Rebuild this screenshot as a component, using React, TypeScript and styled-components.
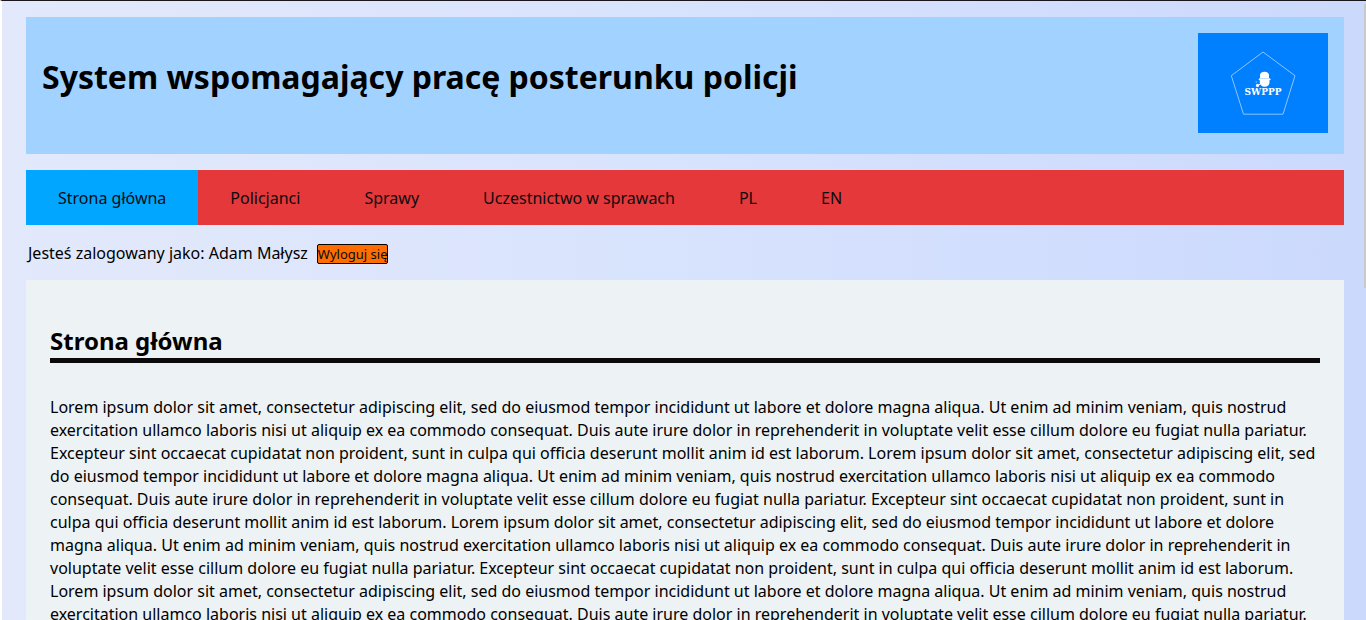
import React from "react";
import styled, { createGlobalStyle } from "styled-components";

const GlobalStyle = createGlobalStyle`
  *, *::before, *::after { box-sizing: border-box; }
  body {
    margin: 0;
    color: #000;
    background: #fff;
    font: 16px/23px "Noto Sans", sans-serif;
  }
`;

const Frame = styled.div`
  position: relative;
  height: 100vh;
  overflow: hidden;
  border-top: 1px solid #1b161c;
  border-left: 2px solid #fff;
`;

const Page = styled.div`
  height: 100%;
  overflow-y: auto;
  scrollbar-width: none;
  padding: 16px 22px 16px 24px;
  background: linear-gradient(90deg, #e3e9fb, #d8e3fd 48%, #cbd9fd);
`;

const ScrollThumb = styled.div`
  position: absolute;
  top: 3px;
  right: 0;
  width: 2px;
  height: 284px;
  background: #c9c9c9;
`;

const Header = styled.header`
  display: flex;
  justify-content: space-between;
  align-items: flex-start;
  padding: 16px 16px 21px;
  background: #a2d2ff;
`;

const Title = styled.h1`
  margin: 22px 0 0;
  font-size: 32px;
  line-height: 44px;
`;

const Logo = styled.svg`
  display: block;
  flex: none;
  width: 130px;
  height: 100px;
  background: #007fff;
`;

const Nav = styled.nav`
  display: flex;
  flex-wrap: wrap;
  margin-top: 16px;
  background: #e5383b;
`;

const NavLink = styled.a<{ $active?: boolean }>`
  padding: 17px 32px 15px;
  color: #0b0b0d;
  text-decoration: none;
  background: ${(p) => (p.$active ? "#00a6ff" : "transparent")};
`;

const Session = styled.div`
  display: flex;
  align-items: center;
  gap: 9px;
  padding: 17px 2px 15px;
`;

const LogoutButton = styled.button`
  height: 20px;
  padding: 0;
  border: 1px solid #000;
  border-radius: 2px;
  color: #0b0b0d;
  background: #ff6d00;
  font: 13px/18px "Noto Sans", sans-serif;
`;

const Main = styled.main`
  padding: 24px;
  background: #edf2f4;
`;

const Heading = styled.h2`
  margin: 20px 0 33px;
  border-bottom: 5px solid #0b090a;
  font-size: 24px;
  line-height: 34px;
`;

const Paragraph = styled.p`
  margin: 0;
`;

const links = ["Strona główna", "Policjanci", "Sprawy", "Uczestnictwo w sprawach", "PL", "EN"];

const lorem =
  "Lorem ipsum dolor sit amet, consectetur adipiscing elit, sed do eiusmod tempor incididunt ut labore et dolore magna aliqua. Ut enim ad minim veniam, quis nostrud exercitation ullamco laboris nisi ut aliquip ex ea commodo consequat. Duis aute irure dolor in reprehenderit in voluptate velit esse cillum dolore eu fugiat nulla pariatur. Excepteur sint occaecat cupidatat non proident, sunt in culpa qui officia deserunt mollit anim id est laborum.";

export default function App() {
  return (
    <Frame>
      <GlobalStyle />
      <Page>
        <Header>
          <Title>System wspomagający pracę posterunku policji</Title>
          <Logo viewBox="0 0 130 100" role="img" aria-label="SWPPP">
            <path d="M65 19 L97 42.700 L85 81.200 H45.500 L33.300 42.700 Z" fill="none" stroke="#8cc6ff" strokeWidth="1" />
            <path
              d="M62 45 V42 C62 40 63.700 38.700 66.500 38.700 C69.300 38.700 71 40 71 42 V45 L73 46.200 L71.500 47.300 V49.500 C71.500 52.200 69.600 53.700 66.700 53.700 C63.800 53.700 62 52.200 61.800 49.500 V47.300 L60.300 46.200 Z"
              fill="#fff"
            />
            <path d="M62 45.500 H71.500" stroke="#a6d2ff" strokeWidth="0.700" />
            <path d="M60.500 52 L63 50.500" stroke="#fff" strokeWidth="1" />
            <circle cx="59.500" cy="52.400" r="1.600" fill="#fff" />
            <circle cx="58.300" cy="49" r="0.800" fill="#7fbfff" />
            <text
              x="65"
              y="62"
              textAnchor="middle"
              fill="#fff"
              fontFamily="'DejaVu Serif', serif"
              fontWeight="bold"
              fontSize="9"
            >
              SWPPP
            </text>
          </Logo>
        </Header>
        <Nav>
          {links.map((label, i) => (
            <NavLink key={label} href="#" $active={i === 0}>
              {label}
            </NavLink>
          ))}
        </Nav>
        <Session>
          <span>Jesteś zalogowany jako: Adam Małysz</span>
          <LogoutButton type="button">Wyloguj się</LogoutButton>
        </Session>
        <Main>
          <Heading>Strona główna</Heading>
          <Paragraph>{Array(6).fill(lorem).join(" ")}</Paragraph>
        </Main>
      </Page>
      <ScrollThumb />
    </Frame>
  );
}
